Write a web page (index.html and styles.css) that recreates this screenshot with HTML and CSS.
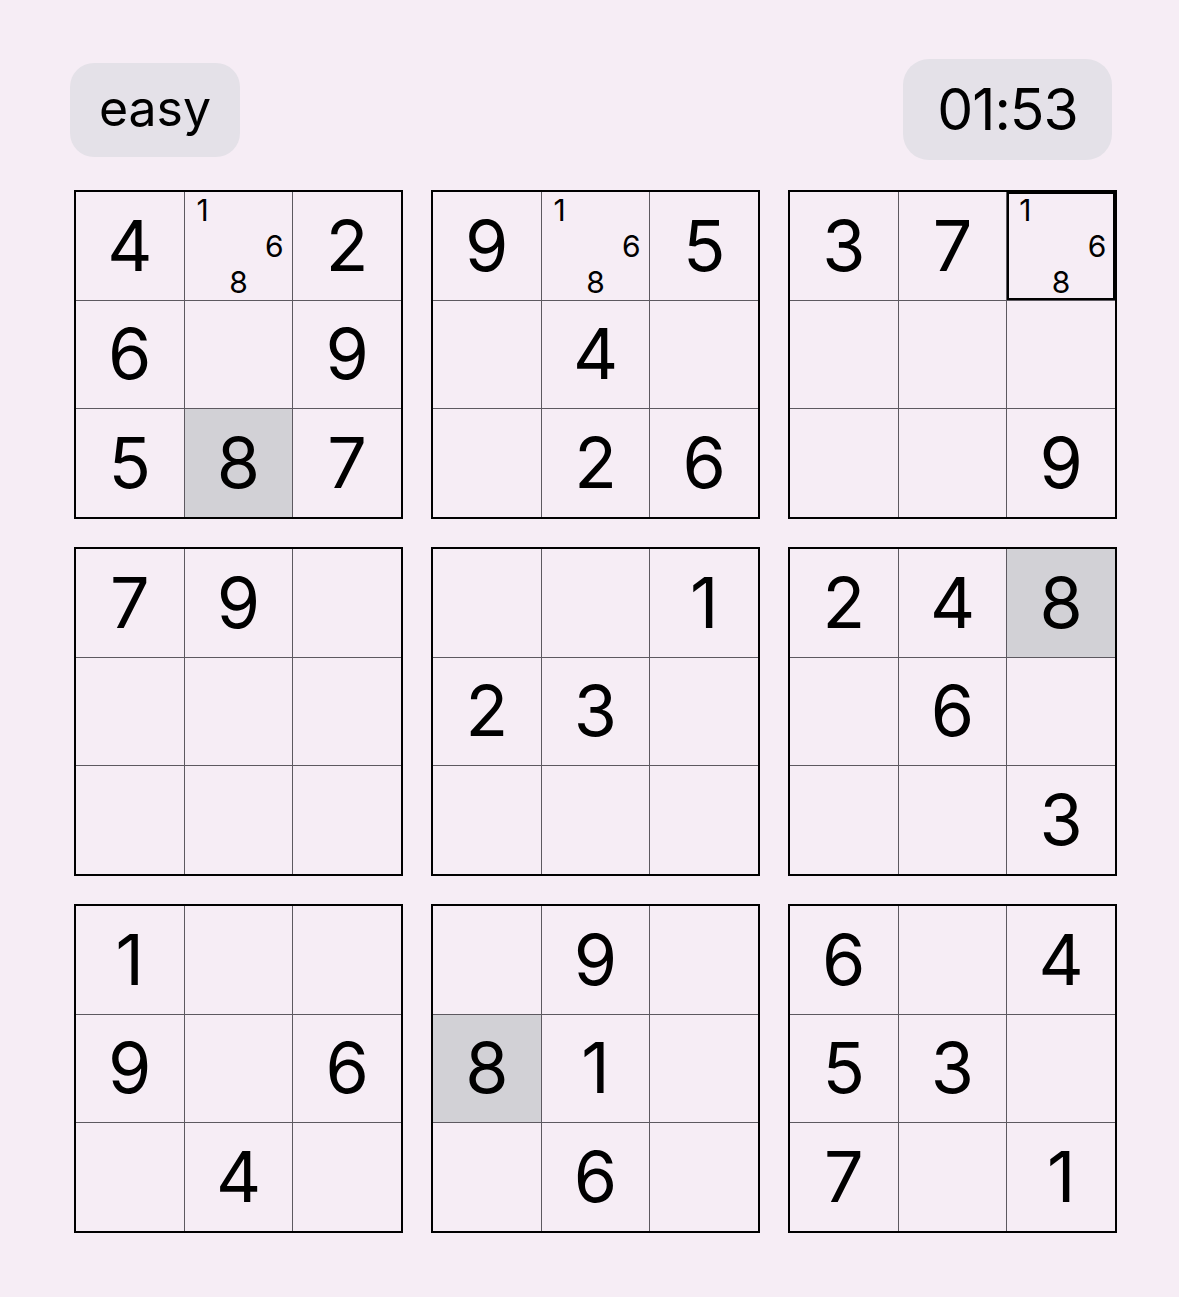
FILE: index.html
```html
<!DOCTYPE html>
<html lang="en">

<head>
    <meta charset="UTF-8">
    <title>sudoku</title>
    <link rel="stylesheet" href="styles.css">
</head>

<body>
    <div class="game">
        <div class="top-bar">
            <div class="pill level">easy</div>
            <div class="pill timer">01:53</div>
        </div>

        <div class="board">
            <div class="box">
                <div class="cell">4</div>
                <div class="cell notes"><span>1</span><span></span><span></span><span></span><span></span><span>6</span><span></span><span>8</span><span></span></div>
                <div class="cell">2</div>
                <div class="cell">6</div>
                <div class="cell"></div>
                <div class="cell">9</div>
                <div class="cell">5</div>
                <div class="cell same">8</div>
                <div class="cell">7</div>
            </div>
            <div class="box">
                <div class="cell">9</div>
                <div class="cell notes"><span>1</span><span></span><span></span><span></span><span></span><span>6</span><span></span><span>8</span><span></span></div>
                <div class="cell">5</div>
                <div class="cell"></div>
                <div class="cell">4</div>
                <div class="cell"></div>
                <div class="cell"></div>
                <div class="cell">2</div>
                <div class="cell">6</div>
            </div>
            <div class="box">
                <div class="cell">3</div>
                <div class="cell">7</div>
                <div class="cell notes selected"><span>1</span><span></span><span></span><span></span><span></span><span>6</span><span></span><span>8</span><span></span></div>
                <div class="cell"></div>
                <div class="cell"></div>
                <div class="cell"></div>
                <div class="cell"></div>
                <div class="cell"></div>
                <div class="cell">9</div>
            </div>

            <div class="box">
                <div class="cell">7</div>
                <div class="cell">9</div>
                <div class="cell"></div>
                <div class="cell"></div>
                <div class="cell"></div>
                <div class="cell"></div>
                <div class="cell"></div>
                <div class="cell"></div>
                <div class="cell"></div>
            </div>
            <div class="box">
                <div class="cell"></div>
                <div class="cell"></div>
                <div class="cell">1</div>
                <div class="cell">2</div>
                <div class="cell">3</div>
                <div class="cell"></div>
                <div class="cell"></div>
                <div class="cell"></div>
                <div class="cell"></div>
            </div>
            <div class="box">
                <div class="cell">2</div>
                <div class="cell">4</div>
                <div class="cell same">8</div>
                <div class="cell"></div>
                <div class="cell">6</div>
                <div class="cell"></div>
                <div class="cell"></div>
                <div class="cell"></div>
                <div class="cell">3</div>
            </div>

            <div class="box">
                <div class="cell">1</div>
                <div class="cell"></div>
                <div class="cell"></div>
                <div class="cell">9</div>
                <div class="cell"></div>
                <div class="cell">6</div>
                <div class="cell"></div>
                <div class="cell">4</div>
                <div class="cell"></div>
            </div>
            <div class="box">
                <div class="cell"></div>
                <div class="cell">9</div>
                <div class="cell"></div>
                <div class="cell same">8</div>
                <div class="cell">1</div>
                <div class="cell"></div>
                <div class="cell"></div>
                <div class="cell">6</div>
                <div class="cell"></div>
            </div>
            <div class="box">
                <div class="cell">6</div>
                <div class="cell"></div>
                <div class="cell">4</div>
                <div class="cell">5</div>
                <div class="cell">3</div>
                <div class="cell"></div>
                <div class="cell">7</div>
                <div class="cell"></div>
                <div class="cell">1</div>
            </div>
        </div>
    </div>
</body>

</html>
```

FILE: styles.css
```css
* {
    margin: 0;
    padding: 0;
    box-sizing: border-box;
}

body {
    background-color: #f6edf5;
    font-family: Inter, "Liberation Sans", sans-serif;
    color: #000;
}

.game {
    width: 1043px;
    margin-left: 74px;
    padding-top: 59px;
}

.top-bar {
    display: flex;
    justify-content: space-between;
    align-items: center;
    margin: 0 5px 0 -4px;
    height: 101px;
}

.pill {
    background-color: #e4e1e8;
    display: flex;
    align-items: center;
    justify-content: center;
}

.level {
    width: 170px;
    height: 94px;
    border-radius: 24px;
    font-size: 50px;
    padding-bottom: 4px;
}

.timer {
    width: 209px;
    height: 101px;
    border-radius: 26px;
    font-size: 57px;
    letter-spacing: -1px;
}

.board {
    display: grid;
    grid-template-columns: repeat(3, 329px);
    grid-auto-rows: 329px;
    gap: 28px;
    margin-top: 30px;
}

.box {
    border: 2px solid #000;
    display: grid;
    grid-template-columns: repeat(3, 1fr);
    grid-template-rows: repeat(3, 1fr);
    gap: 1px;
    background-color: #5d5960;
}

.cell {
    background-color: #f6edf5;
    display: flex;
    align-items: center;
    justify-content: center;
    font-size: 70px;
    line-height: 1;
}

.cell.same {
    background-color: #d2d1d6;
}

.cell.selected {
    box-shadow: inset 0 0 0 2px #000;
}

.notes {
    display: grid;
    grid-template-columns: repeat(3, 1fr);
    grid-template-rows: repeat(3, 1fr);
    font-size: 30px;
}

.notes span {
    display: flex;
    align-items: center;
    justify-content: center;
}
```
